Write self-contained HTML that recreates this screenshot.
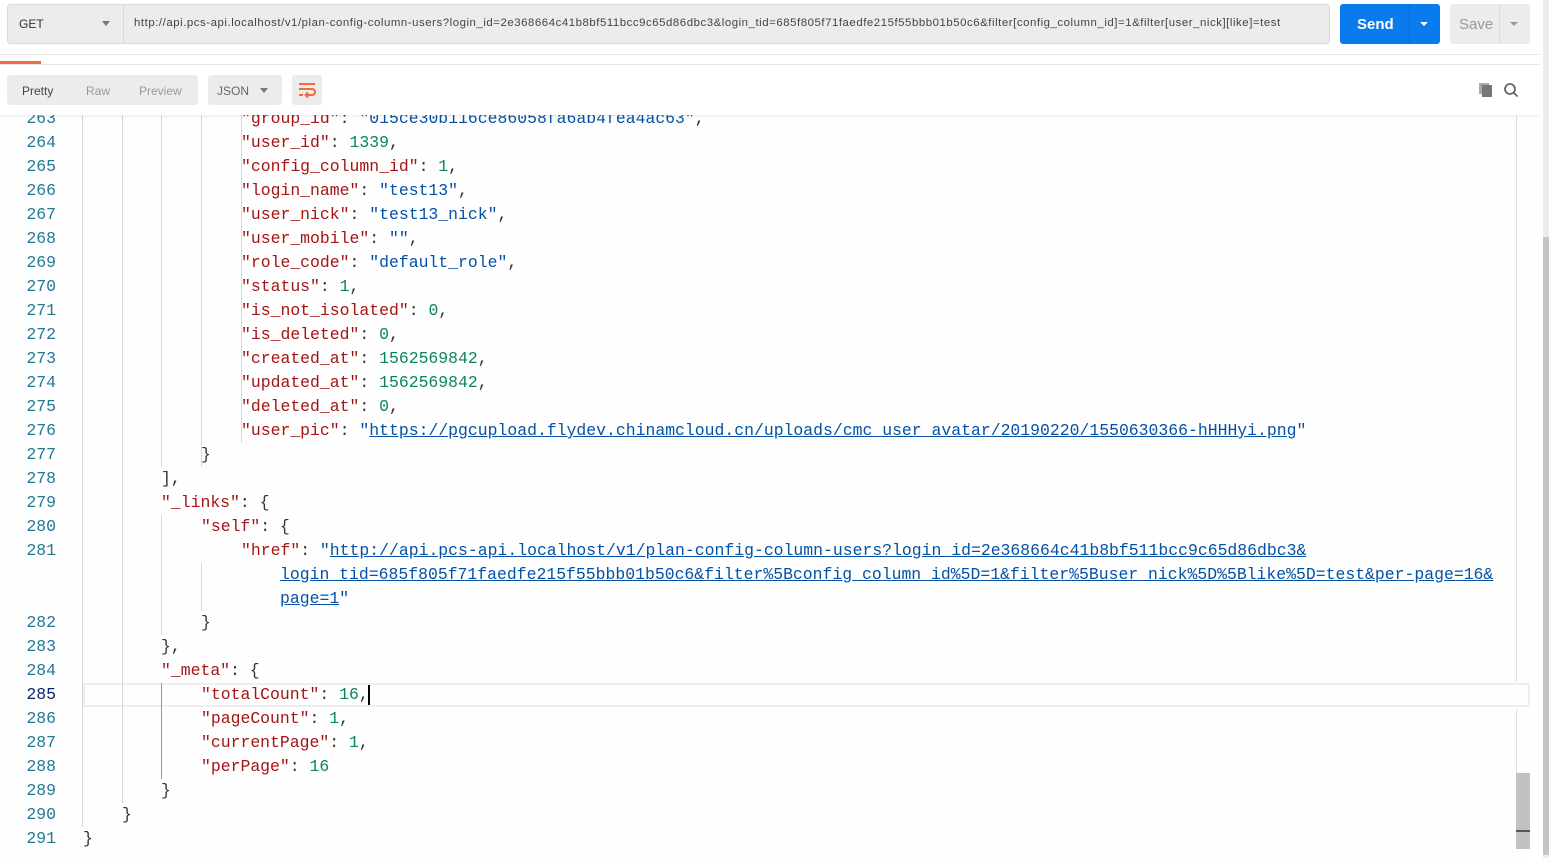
<!DOCTYPE html>
<html><head><meta charset="utf-8"><style>
*{margin:0;padding:0;box-sizing:border-box}
body{width:1552px;height:858px;overflow:hidden;background:#fff;font-family:"Liberation Sans",sans-serif;position:relative}
.abs{position:absolute}
.code{position:absolute;left:0;top:2px;width:1530px;height:856px;overflow:hidden;background:#fefefe}
.ln{position:absolute;left:0;width:56px;text-align:right;color:#237893;font-family:"Liberation Mono",monospace;font-size:16.45px;line-height:24px;height:24px}
.tx{position:absolute;font-family:"Liberation Mono",monospace;font-size:16.45px;line-height:24px;height:24px;white-space:pre;color:#333}
.k{color:#a31515}.n{color:#098658}.s{color:#0451a5}.u{color:#0451a5;text-decoration:underline}
.g{position:absolute;width:1px;background:#d8d8d8}
</style></head><body>
<div class="code">
<div class="abs" style="left:83px;top:681px;width:1447px;height:24px;border:2px solid #eee"></div>
<div class="g" style="left:82px;top:110px;height:715px"></div>
<div class="g" style="left:122px;top:110px;height:691px"></div>
<div class="g" style="left:161px;top:110px;height:355px"></div>
<div class="g" style="left:161px;top:513px;height:120px"></div>
<div class="g" style="left:161px;top:681px;height:96px;background:#999"></div>
<div class="g" style="left:201px;top:110px;height:355px"></div>
<div class="g" style="left:201px;top:561px;height:48px"></div>
<div class="g" style="left:241px;top:110px;height:331px"></div>

<div class="ln" style="top:105px">263</div><div class="tx" style="left:241px;top:105px"><span class="k">"group_id"</span>: <span class="s">"015ce30b116ce86058fa6ab4fea4ac63"</span>,</div>
<div class="ln" style="top:129px">264</div><div class="tx" style="left:241px;top:129px"><span class="k">"user_id"</span>: <span class="n">1339</span>,</div>
<div class="ln" style="top:153px">265</div><div class="tx" style="left:241px;top:153px"><span class="k">"config_column_id"</span>: <span class="n">1</span>,</div>
<div class="ln" style="top:177px">266</div><div class="tx" style="left:241px;top:177px"><span class="k">"login_name"</span>: <span class="s">"test13"</span>,</div>
<div class="ln" style="top:201px">267</div><div class="tx" style="left:241px;top:201px"><span class="k">"user_nick"</span>: <span class="s">"test13_nick"</span>,</div>
<div class="ln" style="top:225px">268</div><div class="tx" style="left:241px;top:225px"><span class="k">"user_mobile"</span>: <span class="s">""</span>,</div>
<div class="ln" style="top:249px">269</div><div class="tx" style="left:241px;top:249px"><span class="k">"role_code"</span>: <span class="s">"default_role"</span>,</div>
<div class="ln" style="top:273px">270</div><div class="tx" style="left:241px;top:273px"><span class="k">"status"</span>: <span class="n">1</span>,</div>
<div class="ln" style="top:297px">271</div><div class="tx" style="left:241px;top:297px"><span class="k">"is_not_isolated"</span>: <span class="n">0</span>,</div>
<div class="ln" style="top:321px">272</div><div class="tx" style="left:241px;top:321px"><span class="k">"is_deleted"</span>: <span class="n">0</span>,</div>
<div class="ln" style="top:345px">273</div><div class="tx" style="left:241px;top:345px"><span class="k">"created_at"</span>: <span class="n">1562569842</span>,</div>
<div class="ln" style="top:369px">274</div><div class="tx" style="left:241px;top:369px"><span class="k">"updated_at"</span>: <span class="n">1562569842</span>,</div>
<div class="ln" style="top:393px">275</div><div class="tx" style="left:241px;top:393px"><span class="k">"deleted_at"</span>: <span class="n">0</span>,</div>
<div class="ln" style="top:417px">276</div><div class="tx" style="left:241px;top:417px"><span class="k">"user_pic"</span>: <span class="s">"<span class="u">https://pgcupload.flydev.chinamcloud.cn/uploads/cmc_user_avatar/20190220/1550630366-hHHHyi.png</span>"</span></div>
<div class="ln" style="top:441px">277</div><div class="tx" style="left:201px;top:441px">}</div>
<div class="ln" style="top:465px">278</div><div class="tx" style="left:161px;top:465px">],</div>
<div class="ln" style="top:489px">279</div><div class="tx" style="left:161px;top:489px"><span class="k">"_links"</span>: {</div>
<div class="ln" style="top:513px">280</div><div class="tx" style="left:201px;top:513px"><span class="k">"self"</span>: {</div>
<div class="ln" style="top:537px">281</div><div class="tx" style="left:241px;top:537px"><span class="k">"href"</span>: <span class="s">"<span class="u">http://api.pcs-api.localhost/v1/plan-config-column-users?login_id=2e368664c41b8bf511bcc9c65d86dbc3&amp;</span></span></div>
<div class="tx" style="left:280px;top:561px"><span class="u">login_tid=685f805f71faedfe215f55bbb01b50c6&amp;filter%5Bconfig_column_id%5D=1&amp;filter%5Buser_nick%5D%5Blike%5D=test&amp;per-page=16&amp;</span></div>
<div class="tx" style="left:280px;top:585px"><span class="s"><span class="u">page=1</span>"</span></div>
<div class="ln" style="top:609px">282</div><div class="tx" style="left:201px;top:609px">}</div>
<div class="ln" style="top:633px">283</div><div class="tx" style="left:161px;top:633px">},</div>
<div class="ln" style="top:657px">284</div><div class="tx" style="left:161px;top:657px"><span class="k">"_meta"</span>: {</div>
<div class="ln" style="top:681px;color:#0b216f">285</div><div class="tx" style="left:201px;top:681px"><span class="k">"totalCount"</span>: <span class="n">16</span>,</div>
<div class="abs" style="left:368px;top:683px;width:2px;height:20px;background:#000"></div>
<div class="ln" style="top:705px">286</div><div class="tx" style="left:201px;top:705px"><span class="k">"pageCount"</span>: <span class="n">1</span>,</div>
<div class="ln" style="top:729px">287</div><div class="tx" style="left:201px;top:729px"><span class="k">"currentPage"</span>: <span class="n">1</span>,</div>
<div class="ln" style="top:753px">288</div><div class="tx" style="left:201px;top:753px"><span class="k">"perPage"</span>: <span class="n">16</span></div>
<div class="ln" style="top:777px">289</div><div class="tx" style="left:161px;top:777px">}</div>
<div class="ln" style="top:801px">290</div><div class="tx" style="left:122px;top:801px">}</div>
<div class="ln" style="top:825px">291</div><div class="tx" style="left:83px;top:825px">}</div>
</div>
<!-- editor scrollbar -->
<div class="abs" style="left:1516px;top:115px;width:1px;height:567px;background:#ddd"></div>
<div class="abs" style="left:1516px;top:709px;width:1px;height:64px;background:#ddd"></div>
<div class="abs" style="left:1516px;top:773px;width:14px;height:76px;background:#c1c1c1"></div>
<div class="abs" style="left:1516px;top:830px;width:14px;height:2px;background:#555"></div>
<!-- header area -->
<div class="abs" style="left:0;top:0;width:1540px;height:115px;background:#fff;box-shadow:0 2px 3px rgba(0,0,0,0.06)"></div>
<div class="abs" style="left:0;top:54px;width:1540px;height:1px;background:#e8e8e8"></div>
<div class="abs" style="left:0;top:64px;width:1540px;height:1px;background:#e6e6e6"></div>
<div class="abs" style="left:0;top:61px;width:41px;height:3px;background:#f26b3a"></div>
<div class="abs" style="left:7px;top:4px;width:1323px;height:40px;background:#ececec;border:1px solid #d9d9d9;border-radius:3px"></div>
<div class="abs" style="left:123px;top:5px;width:1px;height:38px;background:#d9d9d9"></div>
<div class="abs" style="left:19px;top:17px;font-size:12px;color:#333">GET</div>
<div class="abs" style="left:102px;top:21px;border-left:4px solid transparent;border-right:4px solid transparent;border-top:5px solid #777"></div>
<div class="abs" style="left:134px;top:17px;font-size:11.4px;color:#444;white-space:nowrap;letter-spacing:0.55px">http://api.pcs-api.localhost/v1/plan-config-column-users?login_id=2e368664c41b8bf511bcc9c65d86dbc3&amp;login_tid=685f805f71faedfe215f55bbb01b50c6&amp;filter[config_column_id]=1&amp;filter[user_nick][like]=test</div>
<div class="abs" style="left:1340px;top:4px;width:100px;height:40px;background:#097bed;border-radius:3px"></div>
<div class="abs" style="left:1409px;top:4px;width:1px;height:40px;background:#0a6ad0"></div>
<div class="abs" style="left:1357px;top:16px;font-size:15px;font-weight:bold;color:#fff">Send</div>
<div class="abs" style="left:1420px;top:22px;border-left:4px solid transparent;border-right:4px solid transparent;border-top:4px solid #fff"></div>
<div class="abs" style="left:1450px;top:4px;width:80px;height:40px;background:#ececec;border-radius:3px"></div>
<div class="abs" style="left:1499px;top:4px;width:1px;height:40px;background:#ddd"></div>
<div class="abs" style="left:1459px;top:16px;font-size:15px;color:#999">Save</div>
<div class="abs" style="left:1510px;top:22px;border-left:4px solid transparent;border-right:4px solid transparent;border-top:4px solid #999"></div>
<!-- toolbar -->
<div class="abs" style="left:7px;top:75px;width:191px;height:30px;background:#ececec;border-radius:3px"></div>
<div class="abs" style="left:22px;top:84px;font-size:12px;color:#444">Pretty</div>
<div class="abs" style="left:86px;top:84px;font-size:12px;color:#999">Raw</div>
<div class="abs" style="left:139px;top:84px;font-size:12px;color:#999">Preview</div>
<div class="abs" style="left:208px;top:75px;width:74px;height:30px;background:#ececec;border-radius:3px"></div>
<div class="abs" style="left:217px;top:84px;font-size:12px;color:#666">JSON</div>
<div class="abs" style="left:260px;top:88px;border-left:4px solid transparent;border-right:4px solid transparent;border-top:5px solid #777"></div>
<div class="abs" style="left:292px;top:75px;width:30px;height:30px;background:#ececec;border-radius:3px"></div>
<svg class="abs" style="left:297px;top:80px" width="20" height="20" viewBox="0 0 20 20" fill="none" stroke="#f26b3a" stroke-width="2"><path d="M2 4h16M2 9h13a3 3 0 0 1 0 6h-6M11 12.5l-2.5 2.5 2.5 2.5M2 15h4"/></svg>
<svg class="abs" style="left:1478px;top:82px" width="16" height="16" viewBox="0 0 16 16"><rect x="1" y="1" width="10" height="11" fill="#aaa"/><rect x="4" y="3" width="10" height="12" fill="#777"/></svg>
<svg class="abs" style="left:1503px;top:82px" width="16" height="16" viewBox="0 0 16 16" fill="none" stroke="#666" stroke-width="1.8"><circle cx="7" cy="7" r="5"/><path d="M10.5 10.5l4 4"/></svg>
<!-- window scrollbar -->
<div class="abs" style="left:1540px;top:0;width:12px;height:858px;background:#fff"></div>
<div class="abs" style="left:1543px;top:0;width:6px;height:858px;background:#ececec"></div>
<div class="abs" style="left:1543px;top:237px;width:6px;height:618px;background:#c4c4c4"></div>
</body></html>
